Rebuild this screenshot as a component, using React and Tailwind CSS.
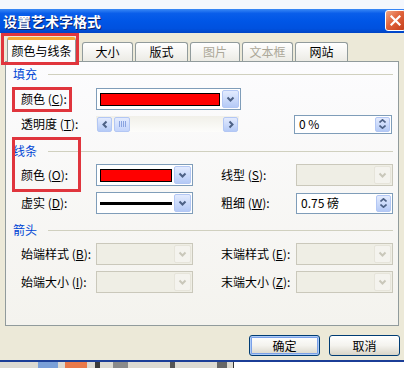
// App.jsx
// Windows XP style "设置艺术字格式" dialog, 颜色与线条 tab.

const FONT = "font-['Noto_Sans_CJK_SC','Liberation_Sans',sans-serif]"

function Chevron({ dir = 'down', color = '#4d6185' }) {
  const d = {
    down: 'M1.5 1.5 L4.5 4.5 L7.5 1.5',
    up: 'M1.5 4.5 L4.5 1.5 L7.5 4.5',
    left: 'M4.5 1.5 L1.5 4.5 L4.5 7.5',
    right: 'M1.5 1.5 L4.5 4.5 L1.5 7.5',
  }[dir]
  const vertical = dir === 'down' || dir === 'up'
  return (
    <svg width={vertical ? 9 : 6} height={vertical ? 6 : 9} viewBox={vertical ? '0 0 9 6' : '0 0 6 9'}>
      <path d={d} fill="none" stroke={color} strokeWidth="2" />
    </svg>
  )
}

function DropBtn({ disabled }) {
  return (
    <div
      className={
        disabled
          ? 'w-[17px] h-full flex items-center justify-center rounded-[2px] border border-[#e6e4da] bg-[#f4f3ee]'
          : 'w-[17px] h-full flex items-center justify-center rounded-[2px] border border-[#b3c7f4] bg-gradient-to-b from-[#e3ebfe] to-[#b5caf6]'
      }
    >
      <Chevron color={disabled ? '#c9c7ba' : '#4d6185'} />
    </div>
  )
}

function Combo({ width = 'w-[97px]', children }) {
  return (
    <div className={`${width} h-[22px] flex border border-[#7f9db9] bg-white p-[1px]`}>
      <div className="flex-1 flex items-center px-[2px]">{children}</div>
      <DropBtn />
    </div>
  )
}

function DisabledCombo() {
  return (
    <div className="w-[97px] h-[22px] flex border border-[#cac8bb] bg-[#efeee5] p-[1px]">
      <div className="flex-1" />
      <DropBtn disabled />
    </div>
  )
}

function Spinner({ value, width = 'w-[98px]', height = 'h-[19px]' }) {
  return (
    <div className={`${width} ${height} flex border border-[#7f9db9] bg-white p-[1px]`}>
      <div className="flex-1 flex items-center pl-[3px] text-[12px] leading-none text-black">{value}</div>
      <div className="w-[15px] h-full flex flex-col items-center justify-center gap-[2px] rounded-[2px] border border-[#b3c7f4] bg-gradient-to-b from-[#e3ebfe] to-[#b5caf6]">
        <svg width="7" height="4" viewBox="0 0 7 4"><path d="M0.5 3.5 L3.5 0.8 L6.5 3.5" fill="none" stroke="#4d6185" strokeWidth="1.6" /></svg>
        <svg width="7" height="4" viewBox="0 0 7 4"><path d="M0.5 0.5 L3.5 3.2 L6.5 0.5" fill="none" stroke="#4d6185" strokeWidth="1.6" /></svg>
      </div>
    </div>
  )
}

function Label({ text, k, width = 'w-[75px]' }) {
  return (
    <div className={`${width} text-[12px] leading-none text-black whitespace-nowrap`}>
      {text} (<span className="underline">{k}</span>):
    </div>
  )
}

function Header({ text, mt }) {
  return (
    <div className={`${mt} h-[12px] flex items-center pl-[7px] pr-[5px]`}>
      <span className="text-[12px] leading-none text-[#0046d5]">{text}</span>
      <div className="flex-1 ml-[11px] h-px bg-[#d0d0bf]" />
    </div>
  )
}

function Tab({ label, active, disabled, cls }) {
  if (active) {
    return (
      <div className={`${cls} relative z-10 -mb-px h-[25px] flex items-center justify-center rounded-t-[3px] border border-b-0 border-[#919b9c] border-t-[3px] border-t-[#f5a834] bg-[#fcfcfe] text-[12px] leading-none text-black`}>
        {label}
      </div>
    )
  }
  return (
    <div
      className={`${cls} h-[19px] flex items-center justify-center rounded-t-[3px] border border-b-0 border-[#919b9c] bg-gradient-to-b from-white to-[#ecebe5] text-[12px] leading-none ${
        disabled ? 'text-[#aca899]' : 'text-black'
      }`}
    >
      {label}
    </div>
  )
}

function Button({ label, primary }) {
  return (
    <div
      className={`w-[71px] h-[21px] flex items-center justify-center rounded-[3px] border border-[#003c74] bg-gradient-to-b from-white via-[#f4f3ee] to-[#d8d4c8] text-[12px] leading-none text-black ${
        primary ? 'shadow-[inset_0_0_0_1px_#aecbf6,inset_0_0_0_2px_#7aa0e8]' : ''
      }`}
    >
      {label}
    </div>
  )
}

export default function App() {
  return (
    <div className={`${FONT} relative w-[404px] h-[368px] overflow-hidden bg-[#ece9d8] flex flex-col`}>
      {/* top edge */}
      <div className="h-[9px] bg-[#f4f7fd]" />

      {/* title bar */}
      <div className="h-[24px] flex items-start bg-[linear-gradient(to_bottom,#3b8af6_0%,#0a5eea_18%,#0056e6_50%,#0051df_82%,#0044c4_100%)]">
        <span className="self-center ml-[3px] text-[14px] font-bold leading-none text-white [text-shadow:1px_1px_0_#0a1f66]">
          设置艺术字格式
        </span>
        <div className="ml-auto -mr-[2px] mt-[1px] w-[21px] h-[21px] flex items-center justify-center rounded-[3px] border border-white bg-[linear-gradient(135deg,#f3a784_0%,#e0633b_45%,#c43d1a_100%)]">
          <svg width="11" height="11" viewBox="0 0 11 11">
            <path d="M1.5 1.5 L9.5 9.5 M9.5 1.5 L1.5 9.5" stroke="white" strokeWidth="2.2" strokeLinecap="square" />
          </svg>
        </div>
      </div>

      {/* tabs */}
      <div className="h-[28px] flex items-end">
        <Tab label="颜色与线条" active cls="ml-[7px] w-[69px]" />
        <Tab label="大小" cls="ml-[6px] w-[51px]" />
        <Tab label="版式" cls="ml-[2px] w-[53px]" />
        <Tab label="图片" disabled cls="ml-[2px] w-[50px]" />
        <Tab label="文本框" disabled cls="ml-[2px] w-[51px]" />
        <Tab label="网站" cls="ml-[2px] w-[53px]" />
      </div>

      {/* tab panel */}
      <div className="mx-[5px] h-[265px] flex flex-col border border-[#919b9c] bg-gradient-to-b from-[#fcfcfe] to-[#f4f3ee]">
        <Header text="填充" mt="mt-[6px]" />

        <div className="mt-[8px] h-[22px] flex items-center pl-[15px]">
          <Label text="颜色" k="C" />
          <Combo width="w-[145px]">
            <div className="w-full h-[13px] border border-black bg-[#ff0000]" />
          </Combo>
        </div>

        <div className="mt-[5px] h-[18px] flex items-center pl-[15px]">
          <Label text="透明度" k="T" />
          <div className="w-[143px] h-[16px] flex items-center gap-[2px] bg-gradient-to-b from-[#f1f0e9] to-[#fdfdfb] px-[1px]">
            <div className="w-[15px] h-[15px] flex items-center justify-center rounded-[2px] border border-[#b3c7f4] bg-gradient-to-b from-[#e3ebfe] to-[#b5caf6]">
              <Chevron dir="left" />
            </div>
            <div className="w-[16px] h-[15px] flex items-center justify-center gap-[1px] rounded-[2px] border border-[#b3c7f4] bg-gradient-to-b from-[#e3ebfe] to-[#c3d4fb]">
              <div className="w-px h-[6px] bg-[#8aa4e0]" />
              <div className="w-px h-[6px] bg-[#8aa4e0]" />
              <div className="w-px h-[6px] bg-[#8aa4e0]" />
              <div className="w-px h-[6px] bg-[#8aa4e0]" />
            </div>
            <div className="flex-1" />
            <div className="w-[15px] h-[15px] flex items-center justify-center rounded-[2px] border border-[#b3c7f4] bg-gradient-to-b from-[#e3ebfe] to-[#b5caf6]">
              <Chevron dir="right" />
            </div>
          </div>
          <div className="ml-[55px]">
            <Spinner value="0 %" />
          </div>
        </div>

        <Header text="线条" mt="mt-[12px]" />

        <div className="mt-[7px] h-[22px] flex items-center pl-[15px]">
          <Label text="颜色" k="O" />
          <Combo>
            <div className="w-full h-[13px] border border-black bg-[#ff0000]" />
          </Combo>
          <div className="ml-[28px]">
            <Label text="线型" k="S" />
          </div>
          <DisabledCombo />
        </div>

        <div className="mt-[6px] h-[22px] flex items-center pl-[15px]">
          <Label text="虚实" k="D" />
          <Combo>
            <div className="w-full h-[3px] bg-black" />
          </Combo>
          <div className="ml-[28px]">
            <Label text="粗细" k="W" />
          </div>
          <Spinner value="0.75 磅" width="w-[97px]" height="h-[21px]" />
        </div>

        <Header text="箭头" mt="mt-[10px]" />

        <div className="mt-[7px] h-[22px] flex items-center pl-[15px]">
          <Label text="始端样式" k="B" />
          <DisabledCombo />
          <div className="ml-[28px]">
            <Label text="末端样式" k="E" />
          </div>
          <DisabledCombo />
        </div>

        <div className="mt-[6px] h-[22px] flex items-center pl-[15px]">
          <Label text="始端大小" k="I" />
          <DisabledCombo />
          <div className="ml-[28px]">
            <Label text="末端大小" k="Z" />
          </div>
          <DisabledCombo />
        </div>
      </div>

      {/* buttons */}
      <div className="mt-[9px] h-[21px] flex justify-end gap-[9px] pr-[4px]">
        <Button label="确定" primary />
        <Button label="取消" />
      </div>

      {/* taskbar strip */}
      <div className="mt-[4px] flex-1 flex flex-col">
        <div className="h-[2px] bg-[#1b3e97]" />
        <div className="flex-1 flex items-stretch">
          <div className="w-[233px] flex items-stretch bg-[#dcdad2]">
            <div className="ml-[38px] w-[20px] bg-[#7aa0d8]" />
            <div className="ml-[7px] w-[22px] bg-[#e8794a]" />
            <div className="ml-[8px] w-[5px] bg-[#3a3a3a]" />
            <div className="ml-[13px] w-[15px] bg-[#8a8a8a]" />
            <div className="ml-[42px] w-[5px] bg-[#555]" />
            <div className="ml-[42px] w-[10px] bg-[#666]" />
          </div>
          <div className="w-px bg-[#333]" />
          <div className="flex-1 bg-white" />
        </div>
      </div>

      {/* red annotation boxes */}
      <div className="absolute left-[1px] top-[33px] w-[78px] h-[32px] border-[3px] border-[#e0353d]" />
      <div className="absolute left-[12px] top-[87px] w-[60px] h-[25px] border-[3px] border-[#e0353d]" />
      <div className="absolute left-[12px] top-[137px] w-[69px] h-[55px] border-[3px] border-[#e0353d]" />
    </div>
  )
}
